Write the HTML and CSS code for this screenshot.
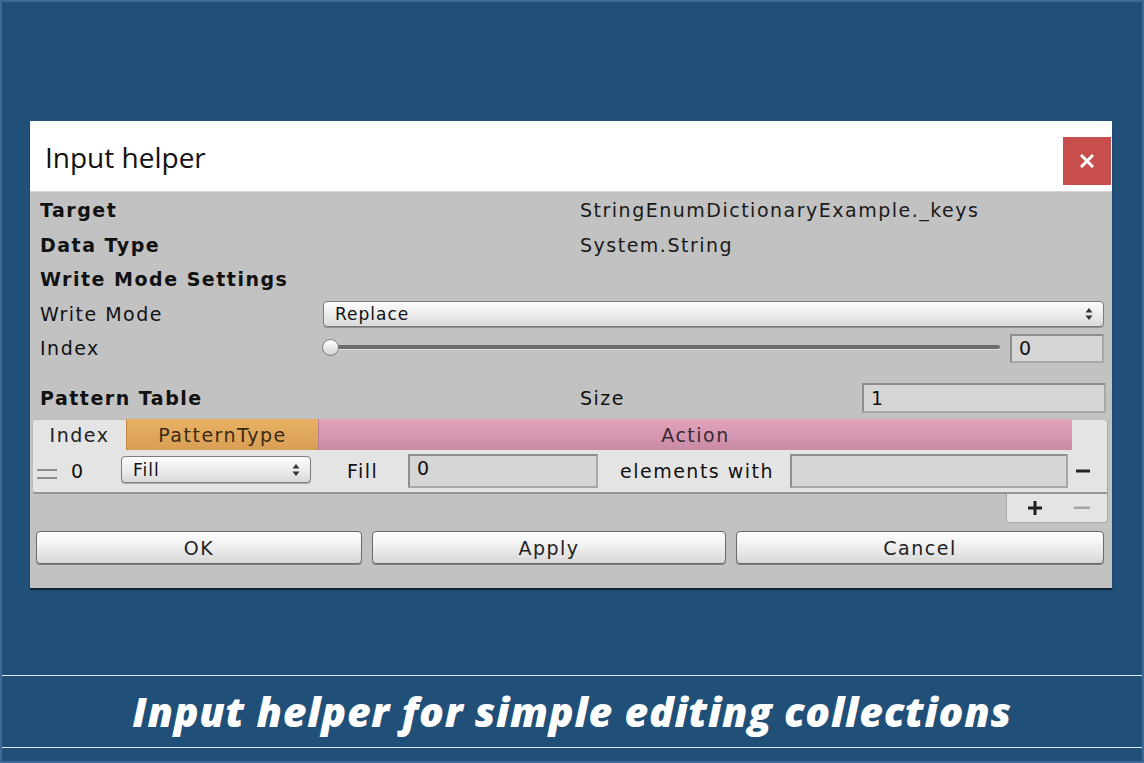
FILE: index.html
```html
<!DOCTYPE html>
<html>
<head>
<meta http-equiv="Content-Type" content="text/html; charset=utf-8"/>
<title>Input helper</title>
<link rel="stylesheet" href="styles.css">
</head>
<body>
<div class="frame">

<div class="dialog">
  <div class="titlebar">
    <span class="title">Input helper</span>
    <span class="close">
      <svg width="14" height="14" viewBox="0 0 14 14"><path d="M2 2 L12 12 M12 2 L2 12" stroke="#fff" stroke-width="3" stroke-linecap="square"/></svg>
    </span>
  </div>

  <div class="panel">
    <div class="row">
      <span class="label bold">Target</span>
      <span class="value">StringEnumDictionaryExample._keys</span>
    </div>
    <div class="row">
      <span class="label bold">Data Type</span>
      <span class="value">System.String</span>
    </div>
    <div class="row">
      <span class="label bold">Write Mode Settings</span>
    </div>
    <div class="row">
      <span class="label short">Write Mode</span>
      <div class="popup wide">
        <span>Replace</span>
        <svg class="arrows" width="8" height="14" viewBox="0 0 8 14"><path d="M4 1 L7.5 5.5 L0.5 5.5 Z M4 13 L7.5 8.5 L0.5 8.5 Z" fill="#333"/></svg>
      </div>
    </div>
    <div class="row">
      <span class="label short">Index</span>
      <div class="slider"><span class="track"></span><span class="knob"></span></div>
      <div class="field num">0</div>
    </div>
    <div class="row pattern">
      <span class="label bold">Pattern Table</span>
      <span>Size</span>
      <div class="field size">1</div>
    </div>

    <div class="table">
      <div class="thead">
        <div class="th th-index">Index</div>
        <div class="th th-type">PatternType</div>
        <div class="th th-action">Action</div>
        <div class="th th-end"></div>
      </div>
      <div class="trow">
        <span class="handle"></span>
        <span class="idx">0</span>
        <div class="popup small">
          <span>Fill</span>
          <svg class="arrows" width="8" height="14" viewBox="0 0 8 14"><path d="M4 1 L7.5 5.5 L0.5 5.5 Z M4 13 L7.5 8.5 L0.5 8.5 Z" fill="#333"/></svg>
        </div>
        <span class="word fill">Fill</span>
        <div class="field cell-count">0</div>
        <span class="word with">elements with</span>
        <div class="field cell-value"></div>
        <span class="remove">
          <svg width="14" height="4" viewBox="0 0 14 4"><rect x="0" y="0.5" width="14" height="3" fill="#222"/></svg>
        </span>
      </div>
    </div>
    <div class="table-foot">
      <div class="foot-box">
        <svg width="16" height="16" viewBox="0 0 16 16"><path d="M8 1 V15 M1 8 H15" stroke="#1e1e1e" stroke-width="3"/></svg>
        <svg width="16" height="4" viewBox="0 0 16 4"><rect x="0" y="0.5" width="16" height="2.5" fill="#a3a3a3"/></svg>
      </div>
    </div>

    <div class="buttons">
      <div class="btn ok">OK</div>
      <div class="btn apply">Apply</div>
      <div class="btn cancel">Cancel</div>
    </div>
  </div>
</div>

<div class="caption">Input helper for simple editing collections</div>

</div>
</body>
</html>
```

FILE: styles.css
```css
body {
  margin: 0;
  background-color: #204f78;
}

.frame {
  width: 1144px;
  height: 763px;
  box-sizing: border-box;
  border: 2px solid #3b6a96;
  background-color: #204f78;
  overflow: hidden;
}

/* dialog window */
.dialog {
  width: 1082px;
  margin: 119px 0 0 28px;
  box-shadow: 0 2px 1px rgba(0, 0, 0, 0.55);
}

.titlebar {
  height: 71px;
  background-color: #fff;
  border-bottom: 1px solid #d6d6d6;
  display: flex;
  align-items: center;
  justify-content: space-between;
  padding-top: 4px;
  box-sizing: border-box;
}

.title {
  font-family: "Open Sans", "Noto Sans", sans-serif;
  font-size: 28px;
  color: #111;
  margin-left: 15px;
  margin-bottom: 2px;
}

.close {
  width: 48px;
  height: 48px;
  margin-right: 1px;
  margin-top: 6px;
  background-color: #c84e4e;
  display: flex;
  align-items: center;
  justify-content: center;
}

.panel {
  background-color: #c2c2c2;
  height: 396px;
  box-sizing: border-box;
  padding: 1px 4px 0 2px;
  font-family: "DejaVu Sans", Verdana, sans-serif;
  font-size: 19px;
  letter-spacing: 1.5px;
  color: #111;
}

.row {
  height: 34.5px;
  display: flex;
  align-items: center;
  padding: 0 4px 0 8px;
}

.label {
  width: 540px;
  flex: none;
}

.label.short {
  width: 283px;
}

.bold {
  font-weight: bold;
}

.value {
  color: #1a1a1a;
}

/* popup field */
.popup {
  height: 26px;
  box-sizing: border-box;
  border: 1px solid #7c7c7c;
  border-radius: 4px;
  background: linear-gradient(#fdfdfd, #e9e9e9 60%, #d9d9d9);
  box-shadow: 0 1px 0 rgba(0, 0, 0, 0.25);
  display: flex;
  align-items: center;
  justify-content: space-between;
  padding: 0 10px 0 11px;
  font-size: 17px;
  letter-spacing: 1px;
}

.popup.wide {
  flex: 1;
}

.arrows {
  flex: none;
}

/* slider */
.slider {
  flex: 1;
  height: 20px;
  position: relative;
  margin-left: -1px;
  margin-right: 10px;
}

.track {
  position: absolute;
  left: 2px;
  right: 0;
  top: 7px;
  height: 4px;
  border-radius: 3px;
  background-color: #6c6c6c;
  box-shadow: 0 1px 0 #dcdcdc;
}

.knob {
  position: absolute;
  left: 0;
  top: 1px;
  width: 17px;
  height: 17px;
  box-sizing: border-box;
  border-radius: 50%;
  border: 1px solid #7a7a7a;
  background: linear-gradient(#ffffff, #d4d4d4);
}

.field {
  box-sizing: border-box;
  background-color: #d6d6d6;
  border: 2px solid #8e8e8e;
  border-bottom-color: #a8a8a8;
  border-right-color: #a8a8a8;
  display: flex;
  align-items: center;
  padding-left: 7px;
  font-size: 19px;
}

.field.num {
  width: 94px;
  height: 29px;
}

.pattern {
  height: 34px;
  margin-top: 15px;
}

.field.size {
  width: 244px;
  height: 30px;
  margin-left: auto;
  margin-right: -2px;
}

/* pattern table */
.table {
  margin-top: 4.5px;
}

.thead {
  display: flex;
  height: 31px;
}

.th {
  display: flex;
  align-items: center;
  justify-content: center;
  box-sizing: border-box;
  color: #222;
}

.th-index {
  width: 94px;
  background-color: #e4e4e4;
  border-top: 1px solid #bdbdbd;
  border-left: 1px solid #bdbdbd;
  border-radius: 3px 0 0 0;
}

.th-type {
  width: 192px;
  background: linear-gradient(#e9b163, #d79e55);
  border-left: 1px solid #c08a45;
  color: #3a2a14;
}

.th-action {
  width: 754px;
  background: linear-gradient(#e1a4bc, #c98aa5);
  border-left: 1px solid #b37c93;
  color: #3a2a32;
}

.th-end {
  flex: 1;
  background-color: #e4e4e4;
  border-top: 1px solid #bdbdbd;
  border-right: 1px solid #a9a9a9;
  border-radius: 0 4px 0 0;
}

.trow {
  height: 44px;
  box-sizing: border-box;
  display: flex;
  align-items: center;
  background-color: #e4e4e4;
  border-bottom: 2px solid #959595;
  border-left: 1px solid #bdbdbd;
  border-right: 1px solid #a9a9a9;
  border-radius: 0 0 0 4px;
}

.handle {
  width: 20px;
  height: 6px;
  margin-left: 4px;
  border-top: 2px solid #8c8c8c;
  border-bottom: 2px solid #8c8c8c;
  margin-top: 6px;
}

.idx {
  margin-left: 14px;
  width: 50px;
}

.popup.small {
  width: 190px;
  height: 27px;
  margin-top: -3px;
}

.word.fill {
  margin-left: 36px;
  width: 61px;
}

.field.cell-count {
  width: 190px;
  height: 34px;
  padding-bottom: 6px;
}

.word.with {
  margin-left: 22px;
  width: 170px;
}

.field.cell-value {
  width: 278px;
  height: 34px;
}

.remove {
  margin-left: 8px;
  display: flex;
}

.table-foot {
  display: flex;
  justify-content: flex-end;
}

.foot-box {
  width: 102px;
  height: 29px;
  box-sizing: border-box;
  background-color: #e4e4e4;
  border: 1px solid #a9a9a9;
  border-top: none;
  border-radius: 0 0 4px 4px;
  display: flex;
  align-items: center;
  gap: 31px;
  padding: 0 0 0 20px;
}

/* buttons */
.buttons {
  display: flex;
  gap: 10px;
  margin-top: 8px;
  padding: 0 0 0 4px;
}

.btn {
  height: 33px;
  box-sizing: border-box;
  border: 1px solid #6a6a6a;
  border-radius: 4px;
  background: linear-gradient(#ffffff, #ececec 55%, #d6d6d6);
  box-shadow: 0 1px 0 rgba(0, 0, 0, 0.35);
  display: flex;
  align-items: center;
  justify-content: center;
  color: #222;
}

.btn.ok { width: 326px; }
.btn.apply { width: 354px; }
.btn.cancel { width: 368px; }

/* caption band */
.caption {
  margin-top: 87px;
  height: 73px;
  box-sizing: border-box;
  border-top: 1px solid #dfe6ee;
  border-bottom: 1px solid #dfe6ee;
  display: flex;
  align-items: center;
  justify-content: center;
  font-family: "Open Sans", "Noto Sans", sans-serif;
  font-weight: 800;
  font-style: italic;
  font-size: 41px;
  letter-spacing: 0.75px;
  color: #fff;
  padding-bottom: 2px;
}
```
